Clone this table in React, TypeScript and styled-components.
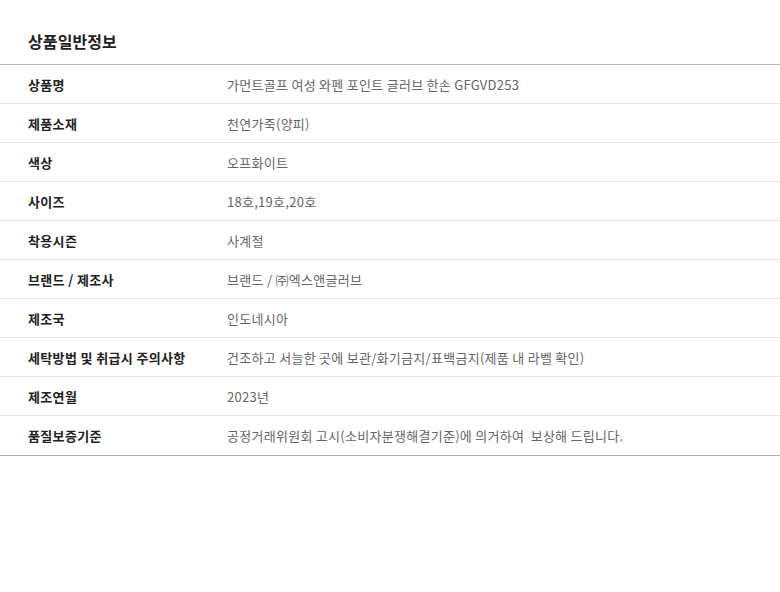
import React from "react";
import styled, { createGlobalStyle } from "styled-components";

const GlobalStyle = createGlobalStyle`
  body {
    margin: 0;
    background: #fff;
    font-family: "Noto Sans CJK KR", "Noto Sans", sans-serif;
  }
`;

const Section = styled.section`
  padding-top: 29px;
`;

const Title = styled.h2`
  margin: 0 0 11px;
  padding-left: 28px;
  font-size: 16px;
  font-weight: 700;
  color: #222;
  line-height: 24px;
  letter-spacing: 0.1px;
`;

const Table = styled.div`
  border-top: 1px solid #b8b8b8;
  border-bottom: 1px solid #b0b0b0;
`;

const Row = styled.div<{ $last?: boolean }>`
  display: grid;
  grid-template-columns: 227px 1fr;
  box-sizing: border-box;
  height: 39px;
  align-items: center;
  border-bottom: ${(p) => (p.$last ? "none" : "1px solid #e6e6e6")};
`;

const Label = styled.div`
  padding-left: 28px;
  font-size: 13px;
  font-weight: 700;
  color: #222;
  letter-spacing: 0.35px;
`;

const Value = styled.div`
  font-size: 13px;
  font-weight: 400;
  color: #666;
  letter-spacing: 0.28px;
  white-space: pre;
`;

const rows: [string, string][] = [
  ["상품명", "가먼트골프 여성 와펜 포인트 글러브 한손 GFGVD253"],
  ["제품소재", "천연가죽(양피)"],
  ["색상", "오프화이트"],
  ["사이즈", "18호,19호,20호"],
  ["착용시즌", "사계절"],
  ["브랜드 / 제조사", "브랜드 / ㈜엑스앤글러브"],
  ["제조국", "인도네시아"],
  ["세탁방법 및 취급시 주의사항", "건조하고 서늘한 곳에 보관/화기금지/표백금지(제품 내 라벨 확인)"],
  ["제조연월", "2023년"],
  ["품질보증기준", "공정거래위원회 고시(소비자분쟁해결기준)에 의거하여  보상해 드립니다."],
];

export default function App() {
  return (
    <>
      <GlobalStyle />
      <Section>
        <Title>상품일반정보</Title>
        <Table>
          {rows.map(([k, v], i) => (
            <Row key={k} $last={i === rows.length - 1}>
              <Label>{k}</Label>
              <Value>{v}</Value>
            </Row>
          ))}
        </Table>
      </Section>
    </>
  );
}
